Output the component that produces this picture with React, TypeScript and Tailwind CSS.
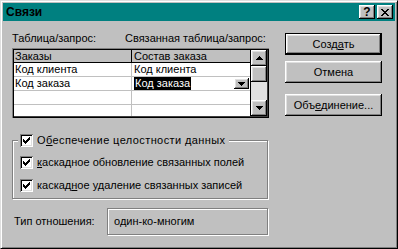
import React from "react";

// Win98 bevels
const raised =
  "shadow-[inset_-1px_-1px_#000,inset_1px_1px_#fff,inset_-2px_-2px_#808080,inset_2px_2px_#dfdfdf]";
const sunken =
  "shadow-[inset_1px_1px_#808080,inset_-1px_-1px_#fff,inset_2px_2px_#000,inset_-2px_-2px_#dfdfdf]";
const etched = "border border-[#808080] shadow-[1px_1px_#fff,inset_1px_1px_#fff]";

const CheckMark = () => (
  <svg width="13" height="13" viewBox="0 0 13 13" shapeRendering="crispEdges" aria-hidden="true">
    {[
      [3, 5],
      [4, 6],
      [5, 7],
      [6, 6],
      [7, 5],
      [8, 4],
      [9, 3],
    ].map(([x, y]) => (
      <rect key={x} x={x} y={y} width="1" height="3" fill="#000" />
    ))}
  </svg>
);

const Checkbox = () => (
  <span className={`block w-[13px] h-[13px] bg-white shrink-0 ${sunken}`}>
    <CheckMark />
  </span>
);

const Arrow = ({ down = false }: { down?: boolean }) => (
  <svg width="7" height="4" viewBox="0 0 7 4" shapeRendering="crispEdges" aria-hidden="true">
    {[0, 1, 2, 3].map((i) => (
      <rect
        key={i}
        x={down ? i : 3 - i}
        y={i}
        width={down ? 7 - 2 * i : 1 + 2 * i}
        height="1"
        fill="#000"
      />
    ))}
  </svg>
);

const CloseGlyph = () => (
  <svg width="8" height="7" viewBox="0 0 8 7" shapeRendering="crispEdges" aria-hidden="true">
    <path
      d="M0 0h2v1H0zM6 0h2v1H6zM1 1h2v1H1zM5 1h2v1H5zM2 2h4v1H2zM3 3h2v1H3zM2 4h4v1H2zM1 5h2v1H1zM5 5h2v1H5zM0 6h2v1H0zM6 6h2v1H6z"
      fill="#000"
    />
  </svg>
);

const Button = ({
  children,
  isDefault = false,
  className = "",
}: {
  children: React.ReactNode;
  isDefault?: boolean;
  className?: string;
}) => (
  <div className={`w-[97px] h-[22px] ${isDefault ? "border border-black" : ""} ${className}`}>
    <div className={`w-full h-full flex items-center justify-center bg-[#c0c0c0] ${raised}`}>
      {children}
    </div>
  </div>
);

const U = ({ children }: { children: React.ReactNode }) => (
  <span className="underline underline-offset-[1px]">{children}</span>
);

export default function App() {
  return (
    <div className="w-[398px] h-[249px] bg-[#c0c0c0] font-['Liberation_Sans',Arial,sans-serif] text-[11px] leading-[13px] text-black border border-[#dfdfdf] border-r-black border-b-black shadow-[inset_1px_1px_#fff,inset_-1px_-1px_#808080] p-[2px] flex flex-col overflow-hidden">
      {/* Caption */}
      <div className="h-[18px] bg-[#008080] flex items-center pl-[3px] pr-[2px] shrink-0">
        <span className="font-bold text-[12px] text-black">Связи</span>
        <div className="ml-auto flex gap-[2px]">
          <div className={`w-[16px] h-[14px] bg-[#c0c0c0] flex items-center justify-center font-bold text-[12px] leading-none ${raised}`}>
            ?
          </div>
          <div className={`w-[16px] h-[14px] bg-[#c0c0c0] flex items-center justify-center ${raised}`}>
            <CloseGlyph />
          </div>
        </div>
      </div>

      {/* Body */}
      <div className="flex pl-[9px]">
        {/* Left column */}
        <div className="w-[257px] pt-[11px] flex flex-col">
          <div className="flex">
            <span className="w-[113px]">Таблица/запрос:</span>
            <span>Связанная таблица/запрос:</span>
          </div>

          {/* Field grid */}
          <div className="mt-[3px] w-[257px] h-[70px] p-[2px] bg-white flex shadow-[inset_1px_1px_#808080,inset_-1px_-1px_#000,inset_2px_2px_#000,inset_-2px_-2px_#404040]">
            <div className="w-[237px] flex flex-col border-r border-black">
              <div className="h-[13px] flex border-b border-black bg-[#c0c0c0] leading-[12px] shrink-0">
                <div className="w-[118px] border-r border-black pl-[1px]">Заказы</div>
                <div className="flex-1 pl-[2px]">Состав заказа</div>
              </div>
              <div className="h-[14px] flex border-b border-[#c0c0c0] shrink-0">
                <div className="w-[118px] border-r border-[#c0c0c0] pl-[1px]">Код клиента</div>
                <div className="flex-1 pl-[2px]">Код клиента</div>
              </div>
              <div className="h-[14px] flex border-b border-[#c0c0c0] shrink-0">
                <div className="w-[118px] border-r border-[#c0c0c0] pl-[1px]">Код заказа</div>
                <div className="flex-1 pl-[2px] pr-[1px] flex items-center justify-between">
                  <span className="bg-black text-white px-[1px]">Код заказа</span>
                  <span className={`w-[15px] h-[11px] bg-[#c0c0c0] flex items-center justify-center ${raised}`}>
                    <Arrow down />
                  </span>
                </div>
              </div>
              <div className="h-[14px] flex border-b border-[#c0c0c0] shrink-0">
                <div className="w-[118px] border-r border-[#c0c0c0]" />
                <div className="flex-1" />
              </div>
              <div className="flex-1 flex">
                <div className="w-[118px] border-r border-[#c0c0c0]" />
                <div className="flex-1" />
              </div>
            </div>

            {/* Scrollbar */}
            <div className="w-[16px] flex flex-col">
              <div className={`h-[16px] bg-[#c0c0c0] flex items-center justify-center shrink-0 ${raised}`}>
                <Arrow />
              </div>
              <div className={`h-[16px] bg-[#c0c0c0] shrink-0 ${raised}`} />
              <div className="flex-1 bg-[#e0e0e0]" />
              <div className={`h-[16px] bg-[#c0c0c0] flex items-center justify-center shrink-0 ${raised}`}>
                <Arrow down />
              </div>
            </div>
          </div>

          {/* Integrity group */}
          <div className={`relative mt-[22px] w-[256px] h-[59px] pt-[15px] pl-[7px] flex flex-col gap-[10px] ${etched}`}>
            <div className="absolute left-[5px] top-[-7px] bg-[#c0c0c0] pl-[2px] pr-[4px] flex items-center gap-[4px]">
              <Checkbox />
              <span className="tracking-[0.4px]">
                О<U>б</U>еспечение целостности данных
              </span>
            </div>
            <div className="h-[13px] flex items-center gap-[4px]">
              <Checkbox />
              <span>
                <U>к</U>аскадное обновление связанных полей
              </span>
            </div>
            <div className="h-[13px] flex items-center gap-[4px]">
              <Checkbox />
              <span>
                каскад<U>н</U>ое удаление связанных записей
              </span>
            </div>
          </div>

          {/* Relation type */}
          <div className="mt-[9px] flex items-center">
            <span className="w-[95px] pl-[2px]">Тип отношения:</span>
            <div className={`w-[161px] h-[27px] flex items-center pl-[6px] ${etched}`}>
              один-ко-многим
            </div>
          </div>
        </div>

        {/* Right column */}
        <div className="ml-[16px] pt-[12px] flex flex-col">
          <Button isDefault>
            <span>
              Созд<U>а</U>ть
            </span>
          </Button>
          <Button className="mt-[6px]">Отмена</Button>
          <Button className="mt-[11px]">
            <span>
              Объ<U>е</U>динение...
            </span>
          </Button>
        </div>
      </div>
    </div>
  );
}
